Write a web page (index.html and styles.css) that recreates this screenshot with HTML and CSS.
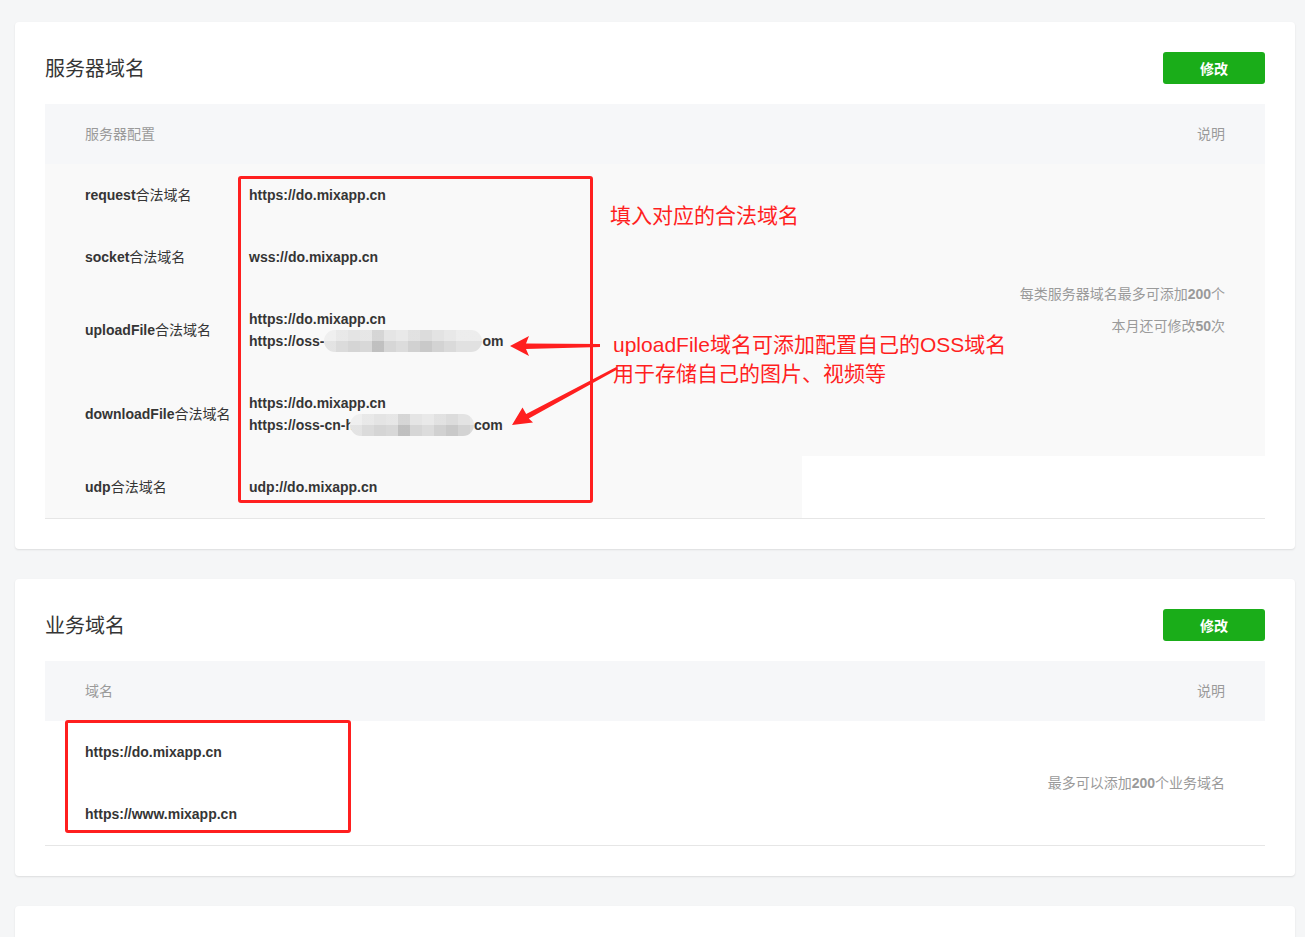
FILE: index.html
```html
<!DOCTYPE html>
<html lang="zh-CN">
<head>
    <meta charset="UTF-8">
    <title>开发设置 - 服务器域名</title>
    <meta name="viewport" content="width=device-width, initial-scale=1.0">
    <link rel="stylesheet" href="styles.css">
</head>
<body>
    <div class="page">
        <!-- 服务器域名 -->
        <section class="card">
            <div class="card_head">
                <h2>服务器域名</h2>
                <button class="btn_primary">修改</button>
            </div>
            <div class="table_wrap">
                <table class="table table_gray">
                    <thead>
                        <tr>
                            <th colspan="2">服务器配置</th>
                            <th class="right">说明</th>
                        </tr>
                    </thead>
                    <tbody>
                        <tr>
                            <td class="label"><b>request</b>合法域名</td>
                            <td class="value">https://do.mixapp.cn</td>
                            <td class="desc" rowspan="4">
                                <p>每类服务器域名最多可添加<b>200</b>个</p>
                                <p>本月还可修改<b>50</b>次</p>
                            </td>
                        </tr>
                        <tr>
                            <td class="label"><b>socket</b>合法域名</td>
                            <td class="value">wss://do.mixapp.cn</td>
                        </tr>
                        <tr>
                            <td class="label"><b>uploadFile</b>合法域名</td>
                            <td class="value">
                                <p>https://do.mixapp.cn</p>
                                <p>https://oss-<span class="mosaic"></span>om</p>
                            </td>
                        </tr>
                        <tr>
                            <td class="label"><b>downloadFile</b>合法域名</td>
                            <td class="value">
                                <p>https://do.mixapp.cn</p>
                                <p>https://oss-cn-h<span class="mosaic mosaic_short"></span>com</p>
                            </td>
                        </tr>
                        <tr>
                            <td class="label"><b>udp</b>合法域名</td>
                            <td class="value">udp://do.mixapp.cn</td>
                        </tr>
                    </tbody>
                </table>

                <!-- annotations -->
                <div class="mark mark_values"></div>
                <span class="note note_fill">填入对应的合法域名</span>
                <span class="note note_oss">uploadFile域名可添加配置自己的OSS域名<br>用于存储自己的图片、视频等</span>
                <svg class="arrows" viewBox="45 104 1220 414" width="1220" height="414">
                    <polygon points="510,346 529,336 526,343.5 600,344 600,347 526,349 529,356" />
                    <polygon points="512,425 522.5,407.5 526.2,413.9 616.3,367 617.7,369.3 528.8,418.6 533,422.5" />
                </svg>
            </div>
        </section>

        <!-- 业务域名 -->
        <section class="card">
            <div class="card_head">
                <h2>业务域名</h2>
                <button class="btn_primary">修改</button>
            </div>
            <div class="table_wrap">
                <table class="table">
                    <thead>
                        <tr>
                            <th>域名</th>
                            <th class="right">说明</th>
                        </tr>
                    </thead>
                    <tbody>
                        <tr>
                            <td class="value first">https://do.mixapp.cn</td>
                            <td class="desc" rowspan="2">
                                <p>最多可以添加<b>200</b>个业务域名</p>
                            </td>
                        </tr>
                        <tr>
                            <td class="value first">https://www.mixapp.cn</td>
                        </tr>
                    </tbody>
                </table>
                <div class="mark mark_business"></div>
            </div>
        </section>

        <section class="card card_stub"></section>
    </div>
</body>
</html>
```

FILE: styles.css
```css
:root {
    --page-bg: #f5f6f7;
    --text: #353535;
    --muted: #9a9a9a;
    --head-bg: #f6f7f9;
    --row-bg: #f9f9f9;
    --line: #e6e6e6;
    --green: #1aad19;
    --red: #ff1f1f;
}
* {
    box-sizing: border-box;
    margin: 0;
    padding: 0;
}
body {
    background: var(--page-bg);
    font-family: "Liberation Sans", "Noto Sans CJK SC", sans-serif;
    font-size: 14px;
    color: var(--text);
}

.page {
    padding: 22px 10px 0 15px;
    display: flex;
    flex-direction: column;
    gap: 30px;
}

/* Card */
.card {
    background: #fff;
    border-radius: 4px;
    box-shadow: 0 1px 2px rgba(0, 0, 0, 0.1);
    padding: 30px 30px 30px;
}
.card_stub {
    height: 60px;
}
.card_head {
    display: flex;
    align-items: center;
    justify-content: space-between;
    height: 32px;
    margin-bottom: 20px;
}
.card_head h2 {
    font-size: 20px;
    font-weight: 400;
    color: var(--text);
    line-height: 32px;
    margin-top: 2px;
}
.btn_primary {
    width: 102px;
    height: 32px;
    border: 0;
    border-radius: 3px;
    background: var(--green);
    color: #fff;
    font-family: inherit;
    font-size: 14px;
    font-weight: 700;
    cursor: pointer;
}

/* Table */
.table_wrap {
    position: relative;
    border-bottom: 1px solid var(--line);
}
.table {
    width: 100%;
    border-collapse: collapse;
    background: #fff;
}
.table th {
    height: 60px;
    padding: 0 40px;
    background: var(--head-bg);
    color: var(--muted);
    font-weight: 400;
    text-align: left;
    line-height: 20px;
}
.table th.right {
    text-align: right;
}
.table td {
    padding: 20px 0;
    line-height: 22px;
    vertical-align: middle;
}
.table_gray td {
    background: var(--row-bg);
}
.table td.label {
    width: 204px;
    padding-left: 40px;
}
.table td.label b,
.table td.value {
    font-weight: 700;
}
.table td.value {
    width: 553px;
    white-space: nowrap;
}
.table td.value p {
    height: 22px;
}
.table td.value.first {
    padding-left: 40px;
    width: auto;
}
.table td.desc {
    padding-right: 40px;
    text-align: right;
    color: var(--muted);
    font-size: 14px;
    line-height: 32px;
}

/* blurred part of a domain */
.mosaic {
    display: inline-block;
    vertical-align: top;
    width: 158px;
    height: 22px;
    border-radius: 11px;
    background:
        linear-gradient(180deg, rgba(255, 255, 255, 0.3) 0 50%, rgba(0, 0, 0, 0.02) 50% 100%),
        linear-gradient(90deg,
            #e8e8e8 0 12px, #dfdfdf 12px 24px, #d9d9d9 24px 36px, #dcdcdc 36px 48px,
            #c4c4c4 48px 60px, #dadada 60px 72px, #e0e0e0 72px 84px, #d5d5d5 84px 96px,
            #cdcdcd 96px 108px, #d7d7d7 108px 120px, #dedede 120px 132px, #e5e5e5 132px 158px);
    filter: blur(0.6px);
}
.mosaic_short {
    width: 124px;
    margin-left: -4px;
}

/* Annotations laid over the table */
.mark {
    position: absolute;
    border: 3px solid var(--red);
    border-radius: 3px;
}
.mark_values {
    left: 193px;
    top: 72px;
    width: 355px;
    height: 327px;
}
.mark_business {
    left: 20px;
    top: 59px;
    width: 286px;
    height: 113px;
}
.note {
    position: absolute;
    color: var(--red);
    white-space: nowrap;
}
.note_fill {
    left: 565px;
    top: 97px;
    font-size: 21px;
    line-height: 30px;
}
.note_oss {
    left: 568px;
    top: 226px;
    font-size: 21px;
    line-height: 29px;
}
.arrows {
    position: absolute;
    left: 0;
    top: 0;
    pointer-events: none;
}
.arrows polygon {
    fill: var(--red);
}
```
